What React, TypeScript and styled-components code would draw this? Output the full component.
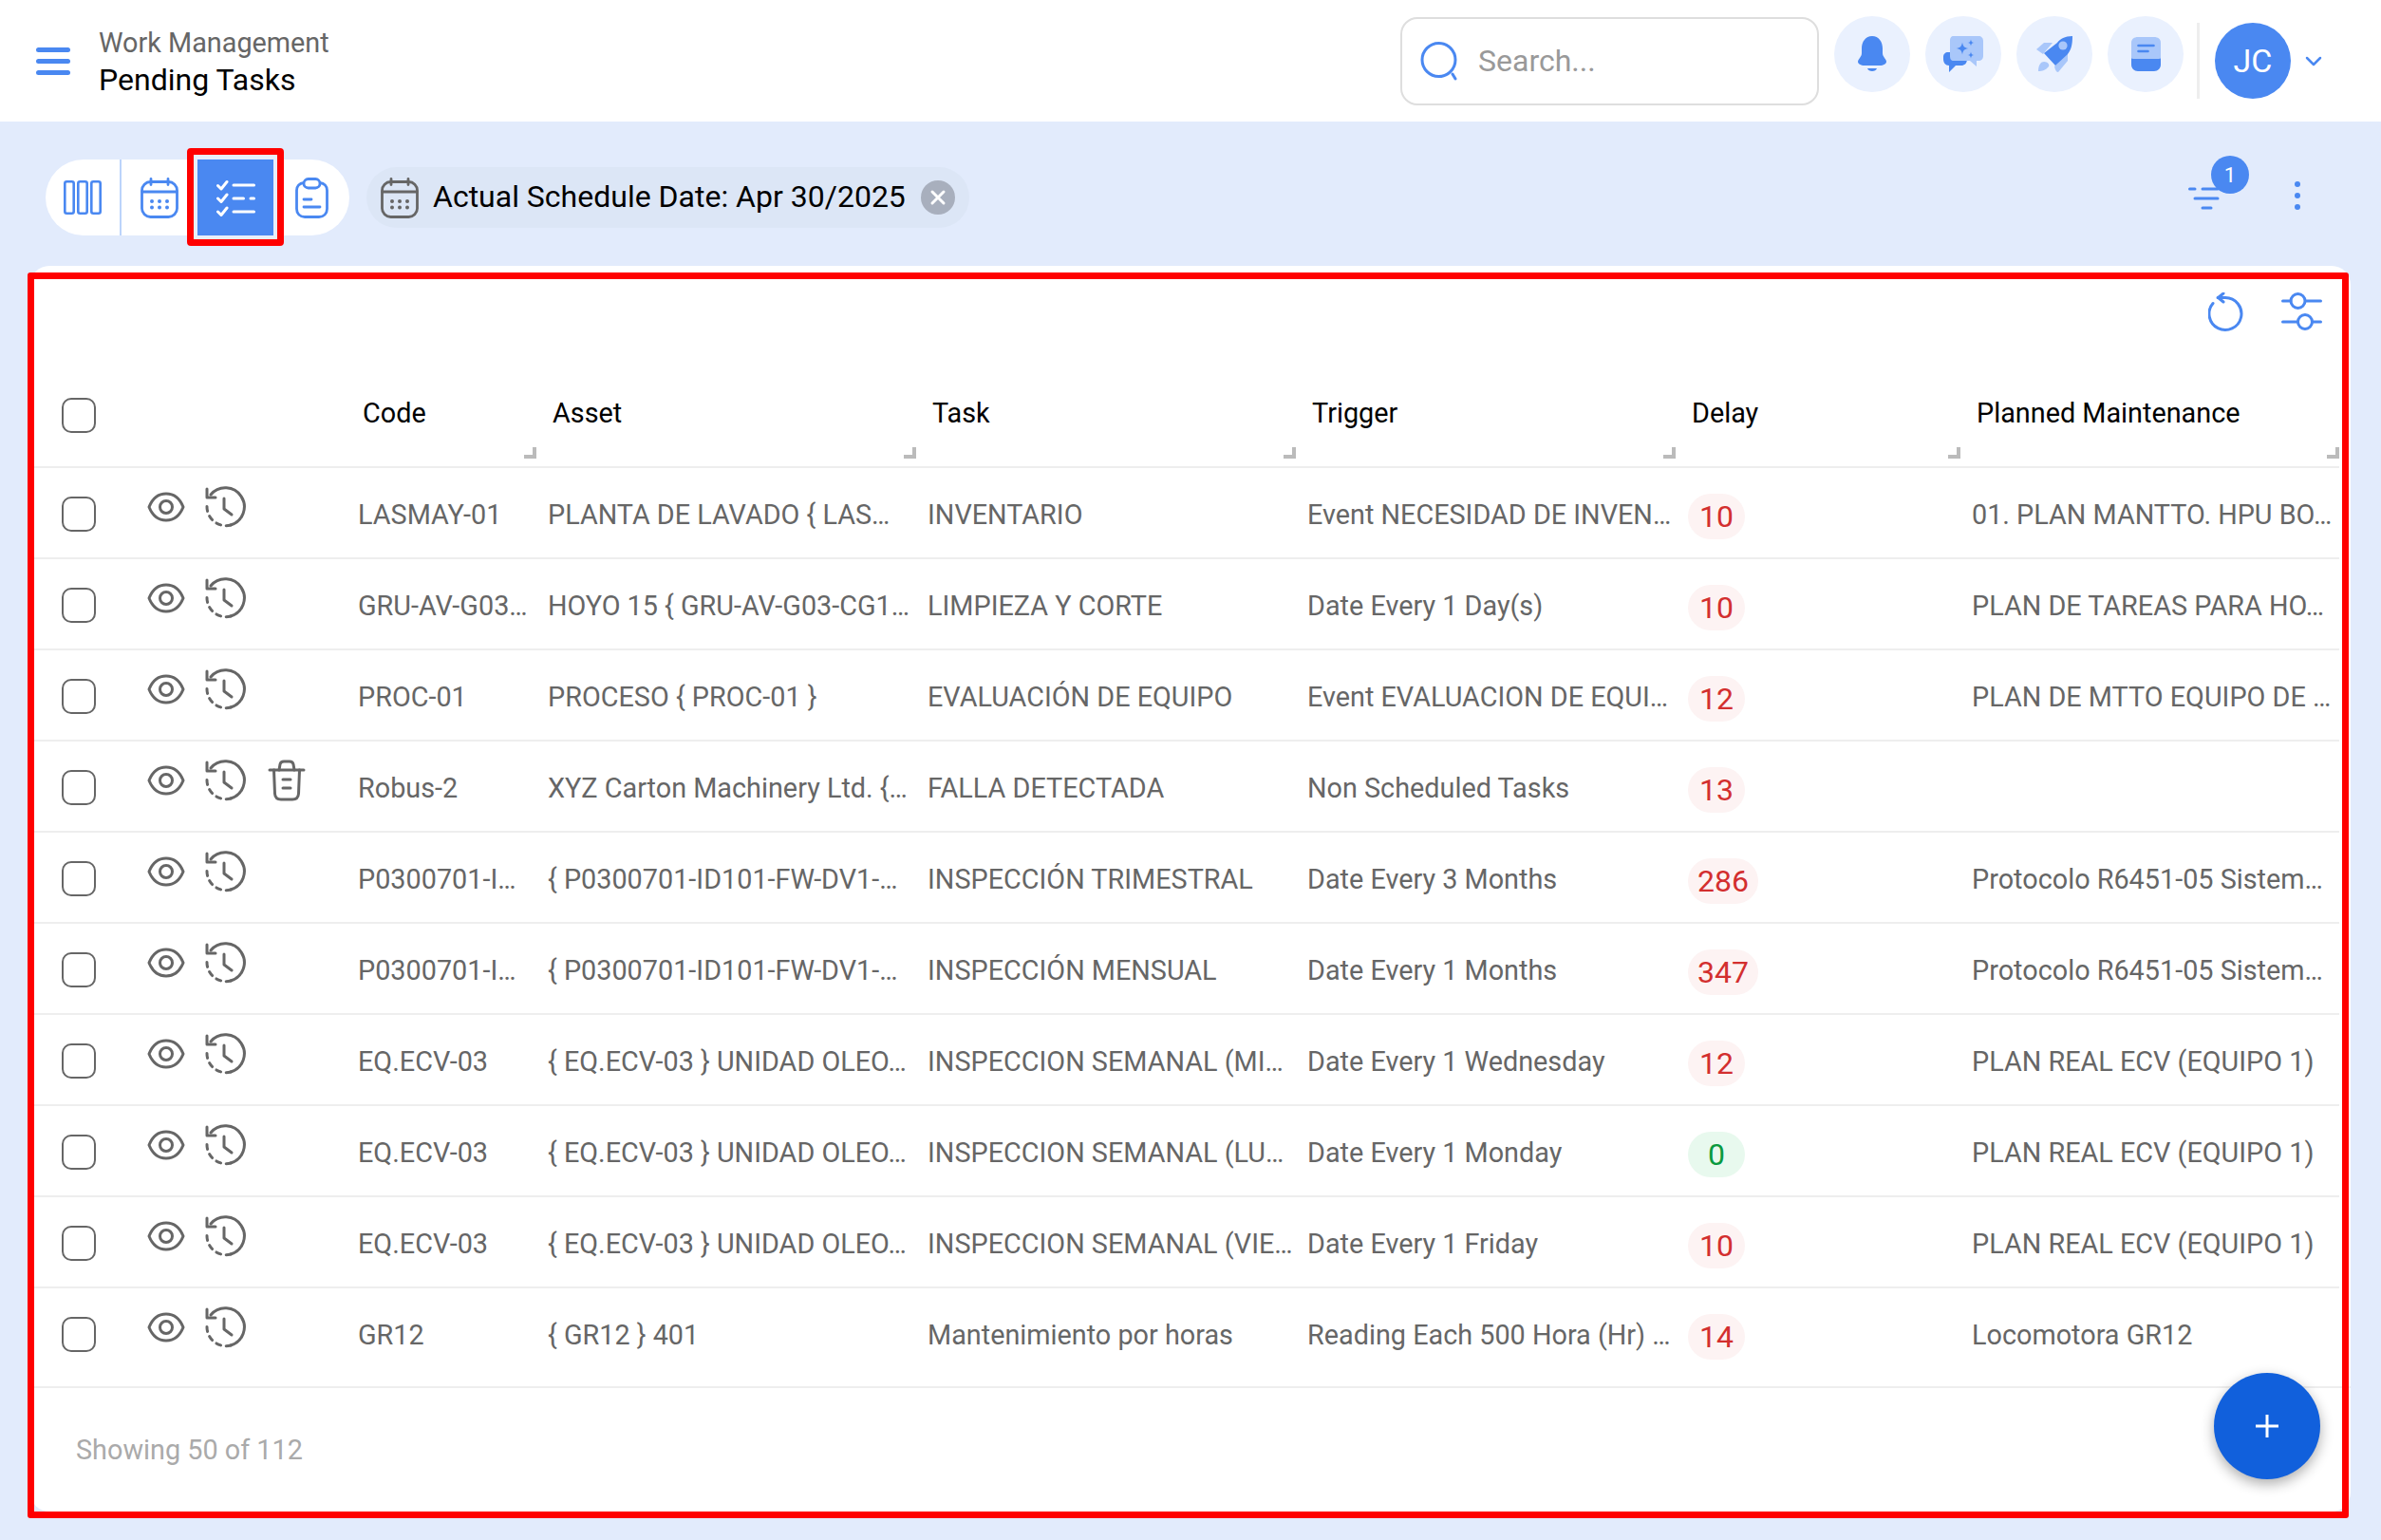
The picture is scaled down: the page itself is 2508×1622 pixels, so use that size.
import React from "react";
import styled, { createGlobalStyle } from "styled-components";

const BLUE = "#4a88f1";
const LIGHT = "#a9c7fa";
const GRAY = "#666666";

const Global = createGlobalStyle`
  html, body { margin: 0; padding: 0; background: #e2ebfc; }
  body { font-family: Roboto, "Liberation Sans", sans-serif; }
  * { box-sizing: border-box; }
`;

const Page = styled.div`
  width: 2508px;
  height: 1622px;
  display: flex;
  flex-direction: column;
  background: #e2ebfc;
  overflow: hidden;
`;

const Header = styled.header`
  height: 128px;
  flex: none;
  background: #ffffff;
  display: flex;
  align-items: center;
  padding: 0 62px 0 38px;
`;

const Burger = styled.div`
  width: 36px;
  display: flex;
  flex-direction: column;
  gap: 7px;
  margin-right: 31px;
  span {
    display: block;
    height: 5px;
    border-radius: 3px;
    background: ${BLUE};
  }
`;

const Titles = styled.div`
  flex: 1;
  display: flex;
  flex-direction: column;
  gap: 3px;
  margin-top: 2px;
  margin-left: -1px;
`;

const Crumb = styled.div`
  font-size: 28.8px;
  line-height: 34px;
  color: ${GRAY};
`;

const PageTitle = styled.div`
  font-size: 32px;
  line-height: 38px;
  color: #000000;
`;

const SearchBox = styled.div`
  width: 441px;
  height: 93px;
  border: 2.5px solid #dedede;
  border-radius: 18px;
  display: flex;
  align-items: center;
  gap: 20px;
  padding-left: 19px;
  margin-right: 16px;
  font-size: 32px;
  color: #999999;
`;

const RoundButton = styled.div`
  width: 80px;
  height: 80px;
  border-radius: 50%;
  background: #eaf1fe;
  display: flex;
  align-items: center;
  justify-content: center;
  margin-right: 16px;
  margin-bottom: 14px;
`;

const VDivider = styled.div`
  width: 3px;
  height: 80px;
  background: #eeeeee;
  margin: 0 16px 0 -2px;
`;

const Avatar = styled.div`
  width: 80px;
  height: 80px;
  border-radius: 50%;
  background: ${BLUE};
  color: #ffffff;
  font-size: 34px;
  display: flex;
  align-items: center;
  justify-content: center;
  margin-right: 15px;
`;

const Toolbar = styled.div`
  height: 152px;
  flex: none;
  display: flex;
  align-items: flex-start;
  padding: 40px 48px 0 48px;
`;

const ViewSwitch = styled.div`
  display: flex;
  height: 80px;
  width: 320px;
  border-radius: 40px;
  background: #ffffff;
  margin-right: 18px;
`;

const ViewButton = styled.div<{ $active?: boolean; $divided?: boolean }>`
  position: relative;
  width: 80px;
  height: 80px;
  display: flex;
  align-items: center;
  justify-content: center;
  background: ${(p) => (p.$active ? BLUE : "transparent")};
  border-right: ${(p) => (p.$divided ? "2px solid #bcd4fb" : "none")};
`;

const ActiveMark = styled.div`
  position: absolute;
  left: -11px;
  top: -12px;
  width: 102px;
  height: 103px;
  border: 7px solid #ff0000;
  border-radius: 4px;
  pointer-events: none;
  box-shadow: inset 0 0 0 4px #e8eefb;
`;

const Chip = styled.div`
  height: 64px;
  margin-top: 8px;
  width: 635px;
  padding: 0 15px 0 15px;
  border-radius: 32px;
  background: #dce6f6;
  display: flex;
  align-items: center;
  font-size: 32px;
  color: #000000;
  white-space: nowrap;
`;

const ChipText = styled.span`
  margin-left: 15px;
  margin-bottom: 2px;
  flex: 1;
`;

const ChipClose = styled.div`
  width: 36px;
  height: 36px;
  border-radius: 50%;
  background: #a8afbd;
  display: flex;
  align-items: center;
  justify-content: center;
`;

const ToolbarEnd = styled.div`
  margin-left: auto;
  display: flex;
  align-items: flex-start;
  margin-top: -1px;
  padding-right: 37px;
`;

const FilterWrap = styled.div`
  position: relative;
  width: 33px;
  height: 24px;
  margin-top: 30px;
  margin-right: 79px;
`;

const FilterBadge = styled.div`
  position: absolute;
  left: 24px;
  top: -33px;
  width: 40px;
  height: 40px;
  border-radius: 50%;
  background: ${BLUE};
  color: #ffffff;
  font-size: 22px;
  display: flex;
  align-items: center;
  justify-content: center;
`;

const Kebab = styled.div`
  display: flex;
  flex-direction: column;
  gap: 6px;
  margin-top: 24px;
  span {
    width: 6px;
    height: 6px;
    border-radius: 50%;
    background: ${BLUE};
  }
`;

const Card = styled.main`
  position: relative;
  width: 2444px;
  height: 1312px;
  margin-left: 32px;
  background: #ffffff;
  border-radius: 20px;
  display: flex;
  flex-direction: column;
`;

const CardMark = styled.div`
  position: absolute;
  left: -3px;
  top: 7px;
  right: 2px;
  bottom: -7px;
  border: 7px solid #ff0000;
  border-radius: 3px;
  pointer-events: none;
`;

const CardTools = styled.div`
  height: 92px;
  flex: none;
  display: flex;
  align-items: flex-start;
  justify-content: flex-end;
  gap: 39px;
  padding: 28px 30px 0 0;
`;

const Grid = styled.div<{ $h: number; $extra?: number; $head?: boolean }>`
  display: grid;
  grid-template-columns: 345px 200px 400px 400px 400px 300px 1fr;
  width: 2432px;
  height: ${(p) => p.$h}px;
  padding-bottom: ${(p) => p.$extra ?? 0}px;
  align-items: center;
  border-bottom: 2px solid #eeeeee;
  font-size: 28.8px;
  color: ${(p) => (p.$head ? "#000000" : GRAY)};
`;

const HeadCell = styled.div`
  position: relative;
  height: 100%;
  display: flex;
  align-items: center;
  padding: 6px 0 0 5px;
`;

const Handle = styled.span<{ $last?: boolean }>`
  position: absolute;
  right: ${(p) => (p.$last ? "0" : "12px")};
  bottom: 8px;
  width: 13px;
  height: 12px;
  border-right: 4px solid #bbbbbb;
  border-bottom: 4px solid #bbbbbb;
`;

const Cell = styled.div`
  white-space: nowrap;
  overflow: hidden;
  padding-top: 4px;
`;

const DelayCell = styled(Cell)`
  padding-left: 1px;
`;

const Actions = styled.div`
  display: flex;
  align-items: center;
  height: 100%;
  padding-left: 33px;
`;

const Check = styled.span<{ $head?: boolean }>`
  width: 36px;
  height: 37px;
  flex: none;
  border: 2.5px solid ${GRAY};
  border-radius: 10px;
  margin-right: 54px;
  margin-top: ${(p) => (p.$head ? "12px" : "3px")};
`;

const IconRow = styled.div`
  display: flex;
  align-items: center;
  margin-bottom: 13px;
  svg { display: block; flex: none; }
`;

const DelayBadge = styled.span<{ $ok?: boolean }>`
  display: inline-block;
  height: 48px;
  min-width: 60px;
  padding: 0 10px;
  border-radius: 24px;
  line-height: 48px;
  text-align: center;
  font-size: 32px;
  margin-top: 4px;
  background: ${(p) => (p.$ok ? "#e8f9ee" : "#fdf3f3")};
  color: ${(p) => (p.$ok ? "#0a9a3f" : "#d32f2f")};
`;

const Footer = styled.div`
  flex: 1;
  border-top: 2px solid #eeeeee;
  margin-top: -2px;
  display: flex;
  align-items: center;
  padding: 0 0 0 48px;
  font-size: 28.8px;
  color: #aaaaaa;
`;

const Fab = styled.div`
  position: absolute;
  right: 32px;
  bottom: 34px;
  width: 112px;
  height: 112px;
  border-radius: 50%;
  background: #1160dc;
  box-shadow: 0 5px 14px rgba(0, 0, 0, 0.32);
  display: flex;
  align-items: center;
  justify-content: center;
`;

const Stroke = (color: string, w = 3) => ({
  fill: "none",
  stroke: color,
  strokeWidth: w,
  strokeLinecap: "round" as const,
  strokeLinejoin: "round" as const,
});

const SearchIcon = () => (
  <svg width="41" height="42" viewBox="0 0 41 42">
    <g {...Stroke(BLUE)}>
      <circle cx="19.5" cy="20" r="17.5" />
      <path d="M34 35 L37 40" />
    </g>
  </svg>
);

const BellIcon = () => (
  <svg width="30" height="39" viewBox="0 0 30 39">
    <path
      fill={BLUE}
      d="M15 0C8 0 4 6 4 13V18C4 22 0 24 0 27C0 29 3 31 7 31H23C27 31 30 29 30 27C30 24 26 22 26 18V13C26 6 22 0 15 0Z"
    />
    <path fill={BLUE} d="M10 34H20C19 38 11 38 10 34Z" />
  </svg>
);

const ChatIcon = () => (
  <svg width="42" height="38" viewBox="0 0 42 38">
    <path fill={BLUE} d="M5 17H20C23 17 25 20 25 24C25 29 22 31 19 31H13L6 38L6 31C2 31 0 28 0 24V22C0 19 2 17 5 17Z" />
    <path fill={LIGHT} d="M11 0H37C40 0 42 2 42 5V21C42 24 40 26 37 26H35V32L28 26H11C8 26 7 24 7 21V5C7 2 8 0 11 0Z" />
    <path fill={BLUE} d="M20 6.5C20.8 11 22 12.2 26.5 13C22 13.8 20.8 15 20 19.5C19.2 15 18 13.8 13.5 13C18 12.2 19.2 11 20 6.5Z" />
    <path fill={BLUE} d="M29 3.5C29.4 6 30 6.6 32.5 7C30 7.4 29.4 8 29 10.5C28.6 8 28 7.4 25.5 7C28 6.6 28.6 6 29 3.5Z" />
    <path fill={BLUE} d="M29 16.5C29.4 19 30 19.6 32.5 20C30 20.4 29.4 21 29 23.5C28.6 21 28 20.4 25.5 20C28 19.6 28.6 19 29 16.5Z" />
  </svg>
);

const RocketIcon = () => (
  <svg width="39" height="39" viewBox="0 0 39 39">
    <path fill={LIGHT} d="M0 14L8 7H17L7 19Z" />
    <path fill={LIGHT} d="M33 17V26L23 38C21 38 20 36 19 32Z" />
    <path fill={LIGHT} d="M2 37C2 30 5 27 8 27C12 27 14 30 13 32C10 36 6 37 2 37Z" />
    <path fill={BLUE} d="M38 0C30 0 25 3 22 7L8 18L20 31L33 19C37 14 38 8 38 0Z" />
    <circle fill={LIGHT} cx="28" cy="10" r="4.6" />
  </svg>
);

const BookIcon = () => (
  <svg width="31" height="36" viewBox="0 0 31 36">
    <path fill={LIGHT} d="M7 0H24C28 0 31 2 31 6V26H0V6C0 2 3 0 7 0Z" />
    <path fill={BLUE} d="M2 23H29L31 22.5V29C31 33 28 36 24 36H7C3 36 0 33 0 29V22.5Z" />
    <path {...Stroke(BLUE, 2.6)} d="M7.5 9H23.5M7.5 15H17.5" />
  </svg>
);

const ChevronIcon = () => (
  <svg width="18" height="11" viewBox="0 0 18 11">
    <path {...Stroke(BLUE, 2.5)} d="M2 2L9 9L16 2" />
  </svg>
);

const ColumnsIcon = () => (
  <svg width="40" height="36" viewBox="0 0 40 36">
    <g {...Stroke(BLUE, 2.6)}>
      <rect x="1.3" y="1.3" width="9.4" height="33.4" rx="2" />
      <rect x="15.3" y="1.3" width="9.4" height="33.4" rx="2" />
      <rect x="29.3" y="1.3" width="9.4" height="33.4" rx="2" />
    </g>
  </svg>
);

const CalendarIcon = ({ color }: { color: string }) => (
  <svg width="40" height="43" viewBox="0 0 40 43">
    <g {...Stroke(color, 2.8)}>
      <rect x="1.5" y="4.5" width="37" height="37" rx="9" />
      <path d="M2 15H38M11 1.5V7.5M29 1.5V7.5" />
    </g>
    <g fill={color}>
      <circle cx="12" cy="25" r="2" />
      <circle cx="20" cy="25" r="2" />
      <circle cx="28" cy="25" r="2" />
      <circle cx="12" cy="31.5" r="2" />
      <circle cx="20" cy="31.5" r="2" />
      <circle cx="28" cy="31.5" r="2" />
    </g>
  </svg>
);

const ChecklistIcon = () => (
  <svg width="41" height="39" viewBox="0 0 41 39">
    <g {...Stroke("#ffffff", 3)}>
      <path d="M1.5 6.5L5 10L11 2.5M1.5 20L5 23.5L11 16M1.5 34L5 37.5L11 30" />
      <path d="M18 6H39.5M18 20H28.5M36 20H39.5M18 34H39.5" />
    </g>
  </svg>
);

const ClipboardIcon = () => (
  <svg width="35" height="43" viewBox="0 0 35 43">
    <g {...Stroke(BLUE, 2.8)}>
      <path d="M9 5.5C4.5 6 1.5 9 1.5 13.5V33C1.5 38 5 41.5 10 41.5H25C30 41.5 33.5 38 33.5 33V13.5C33.5 9 30.5 6 26 5.5" />
      <rect x="9" y="1.5" width="17" height="9.5" rx="4.7" fill="#ffffff" />
      <path d="M9 23H17M9 31H26" />
    </g>
  </svg>
);

const CloseIcon = () => (
  <svg width="18" height="18" viewBox="0 0 18 18">
    <path {...Stroke("#ffffff", 3)} d="M3 3L15 15M15 3L3 15" />
  </svg>
);

const FilterIcon = () => (
  <svg width="33" height="24" viewBox="0 0 33 24">
    <path {...Stroke(BLUE, 3)} d="M1.5 2H7M15 2H31M7 12H31M15 22H24" />
  </svg>
);

const RefreshIcon = () => (
  <svg width="38" height="42" viewBox="0 0 38 42">
    <g {...Stroke(BLUE, 3)}>
      <path d="M5 11.5A17 17 0 1 0 18 5.5H10" />
      <path d="M16 1L10.5 5.5L16 10" />
    </g>
  </svg>
);

const SlidersIcon = () => (
  <svg width="43" height="40" viewBox="0 0 43 40">
    <g {...Stroke(BLUE, 3)}>
      <path d="M1.5 9H10M25.5 9H41.5M1.5 31H17M33 31H41.5" />
      <circle cx="17.5" cy="9" r="7.5" />
      <circle cx="25" cy="31" r="7.5" />
    </g>
  </svg>
);

const EyeIcon = () => (
  <svg width="40" height="32" viewBox="0 0 40 32">
    <g {...Stroke(GRAY, 3)}>
      <path d="M2 16C6 6 12 2 20 2S34 6 38 16C34 26 28 30 20 30S6 26 2 16Z" />
      <circle cx="20" cy="16" r="6.5" />
    </g>
  </svg>
);

const HistoryIcon = () => (
  <svg width="44" height="44" viewBox="0 0 44 44">
    <g {...Stroke(GRAY, 3)}>
      <path d="M7 9A20 20 0 1 1 28 41" />
      <path d="M28 41A20 20 0 0 1 3 21" strokeDasharray="5 5.5" />
      <path d="M3 3V12H12" />
      <path d="M21 13V24L29 30" />
    </g>
  </svg>
);

const TrashIcon = () => (
  <svg width="40" height="46" viewBox="0 0 40 46">
    <g {...Stroke(GRAY, 3)}>
      <path d="M2 12H38" />
      <path d="M12 12L13 6C13.5 4 15 3 17 3H23C25 3 26.5 4 27 6L28 12" />
      <path d="M6.5 12L7.5 37C7.8 41 10 43 14 43H26C30 43 32.2 41 32.5 37L33.5 12" />
      <path d="M16 22H24M16 31H24" />
    </g>
  </svg>
);

const PlusIcon = () => (
  <svg width="26" height="26" viewBox="0 0 26 26">
    <path fill="none" stroke="#ffffff" strokeWidth="3" d="M13 1V25M1 13H25" />
  </svg>
);

type Row = {
  code: string;
  asset: string;
  task: string;
  trigger: string;
  delay: number;
  plan: string;
  trash?: boolean;
};

const rows: Row[] = [
  { code: "LASMAY-01", asset: "PLANTA DE LAVADO { LAS…", task: "INVENTARIO", trigger: "Event NECESIDAD DE INVEN…", delay: 10, plan: "01. PLAN MANTTO. HPU BO…" },
  { code: "GRU-AV-G03…", asset: "HOYO 15 { GRU-AV-G03-CG1…", task: "LIMPIEZA Y CORTE", trigger: "Date Every 1 Day(s)", delay: 10, plan: "PLAN DE TAREAS PARA HO…" },
  { code: "PROC-01", asset: "PROCESO { PROC-01 }", task: "EVALUACIÓN DE EQUIPO", trigger: "Event EVALUACION DE EQUI…", delay: 12, plan: "PLAN DE MTTO EQUIPO DE …" },
  { code: "Robus-2", asset: "XYZ Carton Machinery Ltd. {…", task: "FALLA DETECTADA", trigger: "Non Scheduled Tasks", delay: 13, plan: "", trash: true },
  { code: "P0300701-I…", asset: "{ P0300701-ID101-FW-DV1-…", task: "INSPECCIÓN TRIMESTRAL", trigger: "Date Every 3 Months", delay: 286, plan: "Protocolo R6451-05 Sistem…" },
  { code: "P0300701-I…", asset: "{ P0300701-ID101-FW-DV1-…", task: "INSPECCIÓN MENSUAL", trigger: "Date Every 1 Months", delay: 347, plan: "Protocolo R6451-05 Sistem…" },
  { code: "EQ.ECV-03", asset: "{ EQ.ECV-03 } UNIDAD OLEO…", task: "INSPECCION SEMANAL (MI…", trigger: "Date Every 1 Wednesday", delay: 12, plan: "PLAN REAL ECV (EQUIPO 1)" },
  { code: "EQ.ECV-03", asset: "{ EQ.ECV-03 } UNIDAD OLEO…", task: "INSPECCION SEMANAL (LU…", trigger: "Date Every 1 Monday", delay: 0, plan: "PLAN REAL ECV (EQUIPO 1)" },
  { code: "EQ.ECV-03", asset: "{ EQ.ECV-03 } UNIDAD OLEO…", task: "INSPECCION SEMANAL (VIE…", trigger: "Date Every 1 Friday", delay: 10, plan: "PLAN REAL ECV (EQUIPO 1)" },
  { code: "GR12", asset: "{ GR12 } 401", task: "Mantenimiento por horas", trigger: "Reading Each 500 Hora (Hr) …", delay: 14, plan: "Locomotora GR12" },
];

const heads = ["Code", "Asset", "Task", "Trigger", "Delay", "Planned Maintenance"];

const EyeGap = styled.span`
  width: 20px;
  flex: none;
`;

const HistoryGap = styled.span`
  width: 23px;
  flex: none;
`;

export default function App() {
  return (
    <Page>
      <Global />
      <Header>
        <Burger>
          <span />
          <span />
          <span />
        </Burger>
        <Titles>
          <Crumb>Work Management</Crumb>
          <PageTitle>Pending Tasks</PageTitle>
        </Titles>
        <SearchBox>
          <SearchIcon />
          <span>Search...</span>
        </SearchBox>
        <RoundButton><BellIcon /></RoundButton>
        <RoundButton><ChatIcon /></RoundButton>
        <RoundButton><RocketIcon /></RoundButton>
        <RoundButton><BookIcon /></RoundButton>
        <VDivider />
        <Avatar>JC</Avatar>
        <ChevronIcon />
      </Header>

      <Toolbar>
        <ViewSwitch>
          <ViewButton $divided><ColumnsIcon /></ViewButton>
          <ViewButton><CalendarIcon color={BLUE} /></ViewButton>
          <ViewButton $active>
            <ChecklistIcon />
            <ActiveMark />
          </ViewButton>
          <ViewButton><ClipboardIcon /></ViewButton>
        </ViewSwitch>
        <Chip>
          <CalendarIcon color={GRAY} />
          <ChipText>Actual Schedule Date: Apr 30/2025</ChipText>
          <ChipClose><CloseIcon /></ChipClose>
        </Chip>
        <ToolbarEnd>
          <FilterWrap>
            <FilterIcon />
            <FilterBadge>1</FilterBadge>
          </FilterWrap>
          <Kebab>
            <span />
            <span />
            <span />
          </Kebab>
        </ToolbarEnd>
      </Toolbar>

      <Card>
        <CardTools>
          <RefreshIcon />
          <SlidersIcon />
        </CardTools>
        <Grid $h={121} $head>
          <Actions><Check $head /></Actions>
          {heads.map((h, i) => (
            <HeadCell key={h}>
              {h}
              <Handle $last={i === heads.length - 1} />
            </HeadCell>
          ))}
        </Grid>
        {rows.map((r, i) => {
          const last = i === rows.length - 1;
          return (
            <Grid key={i} $h={last ? 105 : 96} $extra={last ? 9 : 0}>
              <Actions>
                <Check />
                <IconRow>
                  <EyeIcon />
                  <EyeGap />
                  <HistoryIcon />
                  {r.trash && (
                    <>
                      <HistoryGap />
                      <TrashIcon />
                    </>
                  )}
                </IconRow>
              </Actions>
              <Cell>{r.code}</Cell>
              <Cell>{r.asset}</Cell>
              <Cell>{r.task}</Cell>
              <Cell>{r.trigger}</Cell>
              <DelayCell>
                <DelayBadge $ok={r.delay === 0}>{r.delay}</DelayBadge>
              </DelayCell>
              <Cell>{r.plan}</Cell>
            </Grid>
          );
        })}
        <Footer>Showing 50 of 112</Footer>
        <Fab><PlusIcon /></Fab>
        <CardMark />
      </Card>
    </Page>
  );
}
